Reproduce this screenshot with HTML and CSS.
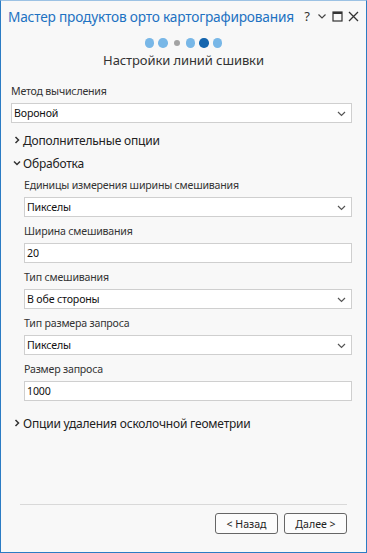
FILE: index.html
```html
<!DOCTYPE html>
<html lang="ru">
<head>
<meta charset="utf-8">
<link rel="stylesheet" href="styles.css">
</head>
<body>
<div class="window">
  <div class="titlebar">
    <span class="title">Мастер продуктов орто картографирования</span>
    <div class="controls">
      <span class="ctl help">?</span>
      <svg class="ctl" width="10" height="8" viewBox="0 0 10 8"><polyline points="1.5,2.5 5,6 8.5,2.5" fill="none" stroke="#444" stroke-width="1.2"/></svg>
      <svg class="ctl" width="11" height="11" viewBox="0 0 11 11"><rect x="1" y="1" width="9" height="9" fill="none" stroke="#333" stroke-width="1.2"/><rect x="1" y="1" width="9" height="2" fill="#333"/></svg>
      <svg class="ctl" width="11" height="11" viewBox="0 0 11 11"><path d="M1 1 L10 10 M10 1 L1 10" stroke="#333" stroke-width="1.3"/></svg>
    </div>
  </div>
  <div class="dots">
    <span class="dot light"></span>
    <span class="dot light"></span>
    <span class="dot small"></span>
    <span class="dot light"></span>
    <span class="dot dark"></span>
    <span class="dot light"></span>
  </div>
  <div class="subtitle">Настройки линий сшивки</div>

  <div class="content">
    <div class="field top">
      <div class="label">Метод вычисления</div>
      <div class="select"><span>Вороной</span><svg width="9" height="6" viewBox="0 0 9 6"><polyline points="1,1 4.5,4.5 8,1" fill="none" stroke="#555" stroke-width="1.2"/></svg></div>
    </div>

    <div class="section collapsed">
      <svg class="chev" width="10" height="10" viewBox="0 0 10 10"><polyline points="3.5,2 6.5,5 3.5,8" fill="none" stroke="#333" stroke-width="1.5"/></svg>
      <span>Дополнительные опции</span>
    </div>

    <div class="section expanded">
      <svg class="chev" width="10" height="10" viewBox="0 0 10 10"><polyline points="2,3.5 5,6.5 8,3.5" fill="none" stroke="#333" stroke-width="1.5"/></svg>
      <span>Обработка</span>
    </div>

    <div class="group">
      <div class="field">
        <div class="label">Единицы измерения ширины смешивания</div>
        <div class="select"><span>Пикселы</span><svg width="9" height="6" viewBox="0 0 9 6"><polyline points="1,1 4.5,4.5 8,1" fill="none" stroke="#555" stroke-width="1.2"/></svg></div>
      </div>
      <div class="field">
        <div class="label">Ширина смешивания</div>
        <div class="input">20</div>
      </div>
      <div class="field">
        <div class="label">Тип смешивания</div>
        <div class="select"><span>В обе стороны</span><svg width="9" height="6" viewBox="0 0 9 6"><polyline points="1,1 4.5,4.5 8,1" fill="none" stroke="#555" stroke-width="1.2"/></svg></div>
      </div>
      <div class="field">
        <div class="label">Тип размера запроса</div>
        <div class="select"><span>Пикселы</span><svg width="9" height="6" viewBox="0 0 9 6"><polyline points="1,1 4.5,4.5 8,1" fill="none" stroke="#555" stroke-width="1.2"/></svg></div>
      </div>
      <div class="field">
        <div class="label">Размер запроса</div>
        <div class="input">1000</div>
      </div>
    </div>

    <div class="section collapsed last">
      <svg class="chev" width="10" height="10" viewBox="0 0 10 10"><polyline points="3.5,2 6.5,5 3.5,8" fill="none" stroke="#333" stroke-width="1.5"/></svg>
      <span>Опции удаления осколочной геометрии</span>
    </div>
  </div>

  <div class="footer">
    <div class="buttons">
      <button class="btn">&lt; Назад</button>
      <button class="btn">Далее &gt;</button>
    </div>
  </div>
</div>
</body>
</html>
```

FILE: styles.css
```css
* { box-sizing: border-box; }
html, body { margin: 0; padding: 0; }
body {
  width: 367px;
  height: 553px;
  font-family: "Noto Sans", "Open Sans", sans-serif;
  color: #222;
  background: #f8f8f8;
}
.window {
  width: 367px;
  height: 553px;
  border: 1px solid #2b7cc4;
  border-top-color: #9cc2e4;
  background: #f8f8f8;
  display: flex;
  flex-direction: column;
}
.titlebar {
  height: 30px;
  display: flex;
  align-items: center;
  justify-content: space-between;
  padding: 0 7px 0 7px;
}
.title {
  font-size: 13.7px;
  color: #1d72c2;
  white-space: nowrap;
  letter-spacing: -0.2px;
}
.controls {
  display: flex;
  align-items: center;
  gap: 5px;
}
.ctl.help {
  font-size: 13px;
  color: #333;
  width: 10px;
  text-align: center;
}
.dots {
  margin-top: 7px;
  height: 10px;
  display: flex;
  justify-content: center;
  align-items: center;
  gap: 4px;
}
.dot {
  width: 9.5px;
  height: 9.5px;
  border-radius: 50%;
  background: #78b7e7;
}
.dot.small {
  width: 6px;
  height: 6px;
  margin: 0 2px;
  background: #a3a3a3;
}
.dot.dark { background: #1565ae; }
.subtitle {
  margin-top: 3px;
  text-align: center;
  font-size: 13px;
  letter-spacing: -0.1px;
  line-height: 18px;
  color: #333;
}
.content {
  padding: 0 14px 0 10px;
}
.field.top { margin-top: 14px; }
.label {
  font-size: 10.6px;
  letter-spacing: -0.2px;
  line-height: 16px;
  color: #333;
  margin-bottom: 4px;
}
.select, .input {
  height: 20px;
  background: #fff;
  border: 1px solid #cfcfcf;
  display: flex;
  align-items: center;
  justify-content: space-between;
  padding: 0 5px 0 2px;
  font-size: 10.6px;
  letter-spacing: -0.15px;
  color: #111;
}
.select svg { margin-top: 1px; }
.section {
  display: flex;
  align-items: center;
  height: 20px;
  font-size: 12px;
  letter-spacing: -0.2px;
  color: #222;
}
.section.collapsed { margin-top: 7px; }
.section.expanded { margin-top: 3px; }
.section.last { margin-top: 12px; }
.chev { margin-left: 1px; margin-right: 1px; }
.group {
  padding-left: 13px;
  margin-top: 4px;
}
.group .field + .field { margin-top: 6px; }
.footer {
  margin-top: auto;
  padding: 0 19px 18px 19px;
}
.buttons {
  border-top: 1px solid #d9d9d9;
  padding-top: 8px;
  display: flex;
  justify-content: flex-end;
  gap: 6px;
}
.btn {
  width: 63px;
  height: 21px;
  border: 1px solid #666;
  border-radius: 3px;
  background: #fcfcfc;
  font-family: "Noto Sans", "Open Sans", sans-serif;
  font-size: 10.6px;
  color: #222;
  padding: 0;
}
```
